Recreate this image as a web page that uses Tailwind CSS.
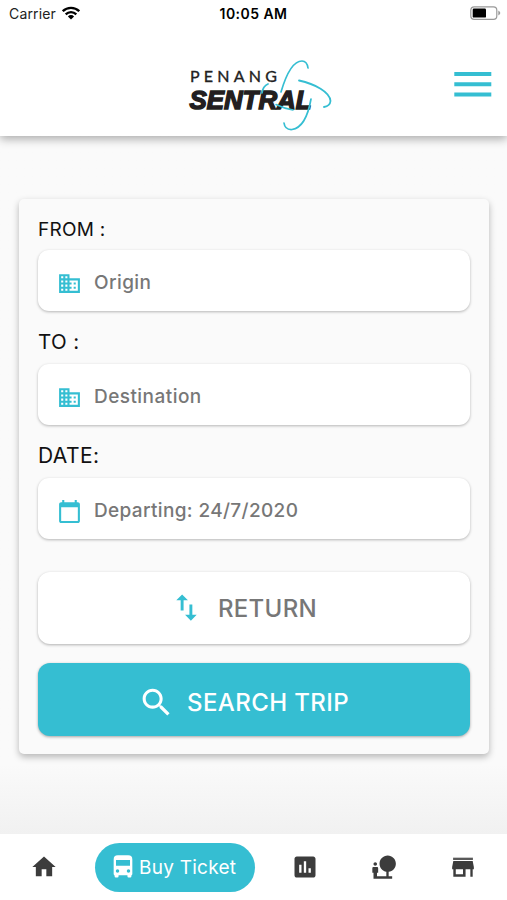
<!DOCTYPE html>
<html lang="en">
<head>
<meta charset="utf-8">
<title>Penang Sentral</title>
<script src="https://cdn.jsdelivr.net/npm/@tailwindcss/browser@4"></script>
</head>
<body class="w-[507px] h-[900px] overflow-hidden bg-[#fafafa] flex flex-col font-['Inter',sans-serif]">
<header class="relative z-10 h-[136px] shrink-0 bg-white shadow-[0_3px_9px_rgba(0,0,0,0.32)] flex flex-col">
  <div class="h-7 grid grid-cols-3 items-center pl-[9px] pr-[6px] text-black">
    <div class="flex items-center gap-[6px] -mt-[2px]">
      <span class="text-[14px] tracking-[0.15px] text-[#222]">Carrier</span>
      <svg class="w-[18px] h-[14px]" viewBox="0 0 18 14"><g fill="none" stroke="#000" stroke-width="2.3"><path d="M.8 5.2a11.7 11.7 0 0 1 16.4 0"/><path d="M3.700 8.400a7.500 7.500 0 0 1 10.600 0"/></g><path d="M5.900 10.400a4.400 4.400 0 0 1 6.200 0L9 13.600z"/></svg>
    </div>
    <span class="text-center text-[14px] font-semibold tracking-[0.45px] whitespace-nowrap -mt-[2px] -ml-[3px]">10:05 AM</span>
    <svg class="justify-self-end w-[31px] h-[14px] -mt-[2px]" viewBox="0 0 31 14"><rect x=".8" y=".8" width="26" height="12.600" rx="3.400" fill="#fff" stroke="#999" stroke-width="1.200"/><rect x="2.700" y="2.600" width="13.300" height="9" rx="1.200"/><path d="M28.300 4.500q4 2.500 0 5z" fill="#999"/></svg>
  </div>
  <div class="flex-1 flex items-start justify-end pr-[14px]">
    <svg class="w-[150px] h-[80px] mt-[24px] mr-[119px]" viewBox="184 52 150 80">
      <text x="190" y="81.500" font-family="Lato" font-size="16" fill="#222" stroke="#222" stroke-width=".35" textLength="87" lengthAdjust="spacing">PENANG</text>
      <text x="189.500" y="108.800" font-family="Liberation Sans" font-size="26.500" font-weight="700" font-style="italic" fill="#231f20" stroke="#231f20" stroke-width="1.500" textLength="122" lengthAdjust="spacingAndGlyphs">SENTRAL</text>
      <g fill="none" stroke="#35bed2" stroke-linecap="round">
        <path d="M281 92C286 75 293 61 302 61Q307 61 308 68" stroke-width="1.700"/>
        <path d="M299 80.500C315 84 330 92 330.500 101Q330 106 324 107" stroke-width="1.800"/>
        <path d="M284 123Q285 130 292 129.500C302 128 308 116 311 99" stroke-width="1.700"/>
        <path d="M262 93Q263 86 268 84" stroke-width="1.700"/>
        <path d="M276 104.500Q284 108.500 293 110" stroke-width="1.500"/>
      </g>
    </svg>
    <svg class="w-[40px] h-[28px] mt-[42px]" viewBox="0 0 40 28" fill="#35bed2"><path d="M1.300 2h37v4h-37zM1.300 12.200h37v4h-37zM1.300 22.400h37v4h-37z"/></svg>
  </div>
</header>

<main class="flex-1 px-[19px] pt-[63px] bg-linear-to-b from-[#fafafa] from-90% to-[#f1f1f1]">
  <section class="w-[470px] h-[555px] rounded-[5px] bg-[#fafafa] shadow-[0_3px_7px_rgba(0,0,0,0.28)] px-[19px] pt-[18px] flex flex-col text-[19.5px] text-[#111]">
    <label class="h-[33px] pt-px leading-6 text-[19px] tracking-[0.25px]">FROM :</label>
    <div class="h-[61px] shrink-0 rounded-[11px] bg-white shadow-[0_1px_3px_rgba(0,0,0,0.28)] flex items-center pl-[19px] pt-[5px] gap-[12px] text-[#777] font-medium">
      <svg class="w-[25px] h-[25px]" viewBox="0 0 24 24" fill="#35bed2"><path d="M12 7V3H2v18h20V7H12zM6 19H4v-2h2v2zm0-4H4v-2h2v2zm0-4H4V9h2v2zm0-4H4V5h2v2zm4 12H8v-2h2v2zm0-4H8v-2h2v2zm0-4H8V9h2v2zm0-4H8V5h2v2zm10 12h-8v-2h2v-2h-2v-2h2v-2h-2V9h8v10zm-2-8h-2v2h2v-2zm0 4h-2v2h2v-2z"/></svg>
      <span class="text-[19px] tracking-[0.4px] pt-px">Origin</span>
    </div>
    <label class="h-[53px] pt-[19px] leading-6 text-[20.5px] tracking-[0.4px]">TO :</label>
    <div class="h-[61px] shrink-0 rounded-[11px] bg-white shadow-[0_1px_3px_rgba(0,0,0,0.28)] flex items-center pl-[19px] pt-[5px] gap-[12px] text-[#777] font-medium">
      <svg class="w-[25px] h-[25px]" viewBox="0 0 24 24" fill="#35bed2"><path d="M12 7V3H2v18h20V7H12zM6 19H4v-2h2v2zm0-4H4v-2h2v2zm0-4H4V9h2v2zm0-4H4V5h2v2zm4 12H8v-2h2v2zm0-4H8v-2h2v2zm0-4H8V9h2v2zm0-4H8V5h2v2zm10 12h-8v-2h2v-2h-2v-2h2v-2h-2V9h8v10zm-2-8h-2v2h2v-2zm0 4h-2v2h2v-2z"/></svg>
      <span class="text-[19px] tracking-[0.45px] pt-px">Destination</span>
    </div>
    <label class="h-[53px] pt-[19px] leading-6 text-[21px] tracking-[0.4px]">DATE:</label>
    <div class="h-[61px] shrink-0 rounded-[11px] bg-white shadow-[0_1px_3px_rgba(0,0,0,0.28)] flex items-center pl-[19px] pt-[5px] gap-[12px] text-[#777] font-medium">
      <svg class="w-[25px] h-[25px]" viewBox="0 0 24 24" fill="#35bed2"><path d="M20 3h-1V1h-2v2H7V1H5v2H4c-1.100 0-2 .9-2 2v16c0 1.100.9 2 2 2h16c1.100 0 2-.9 2-2V5c0-1.100-.9-2-2-2zm0 18H4V8h16v13z"/></svg>
      <span class="text-[19px] tracking-[0.35px] pt-px">Departing: 24/7/2020</span>
    </div>
    <button class="mt-[33px] h-[72px] shrink-0 rounded-[12px] bg-white shadow-[0_1px_3px_rgba(0,0,0,0.3)] flex items-center pl-[131px] gap-[14px] text-[#777] font-medium">
      <svg class="w-[35px] h-[35px] -mt-px" viewBox="0 0 24 24" fill="#35bed2"><path d="M9 3L5 6.990h3V14h2V6.990h3L9 3zm7 14.010V10h-2v7.010h-3L15 21l4-3.990h-3z"/></svg>
      <span class="text-[24px] tracking-[0.3px] pt-px">RETURN</span>
    </button>
    <button class="mt-[19px] h-[73px] shrink-0 rounded-[12px] bg-[#35bed2] shadow-[0_1px_3px_rgba(0,0,0,0.35)] flex items-center pl-[100px] pt-[5px] gap-[12px] text-white font-medium">
      <svg class="w-[37px] h-[37px]" viewBox="0 0 24 24" fill="#fff"><path d="M15.500 14h-.79l-.28-.27C15.410 12.590 16 11.110 16 9.500 16 5.910 13.090 3 9.500 3S3 5.910 3 9.500 5.910 16 9.500 16c1.610 0 3.090-.59 4.230-1.570l.27.28v.79l5 4.990L20.490 19l-4.990-5zm-6 0C7.010 14 5 11.990 5 9.500S7.010 5 9.500 5 14 7.010 14 9.500 11.990 14 9.500 14z"/></svg>
      <span class="text-[24px] tracking-[0.4px] pt-px">SEARCH TRIP</span>
    </button>
  </section>
</main>

<nav class="h-[66px] shrink-0 bg-white flex items-center pl-[30px] text-[#3c3c3c]">
  <svg class="w-7 h-7 mr-[37px]" viewBox="0 0 24 24" fill="currentColor"><path d="M10 20v-6h4v6h5v-8h3L12 3 2 12h3v8z"/></svg>
  <a class="w-[160px] h-[49px] rounded-full bg-[#35bed2] text-white flex items-center pl-[14px] gap-[2px] mr-[36px]">
    <svg class="w-7 h-7 shrink-0" viewBox="0 0 24 24" fill="currentColor"><path fill-rule="evenodd" d="M4 5.500Q4 2 7.500 2h9Q20 2 20 5.500V18q0 .8-.8 1.200V20q0 1-1 1h-1.400q-1 0-1-1v-1H8.200v1q0 1-1 1H5.800q-1 0-1-1v-.8Q4 18.800 4 18zM6 6v5h12V6zM7.300 14a1.500 1.500 0 1 0 0 3 1.500 1.500 0 0 0 0-3zm9.400 0a1.500 1.500 0 1 0 0 3 1.500 1.500 0 0 0 0-3z"/></svg>
    <span class="text-[19px] tracking-[0.25px] whitespace-nowrap pt-[2px]">Buy Ticket</span>
  </a>
  <svg class="w-7 h-7 mr-[51px]" viewBox="0 0 24 24" fill="currentColor"><path d="M19 3H5c-1.100 0-2 .9-2 2v14c0 1.100.9 2 2 2h14c1.100 0 2-.9 2-2V5c0-1.100-.9-2-2-2zM9 17H7v-7h2v7zm4 0h-2V7h2v10zm4 0h-2v-4h2v4z"/></svg>
  <svg class="w-7 h-7 mr-[51px]" viewBox="0 0 24 24" fill="currentColor"><path d="M22.170 9.170c0-3.870-3.130-7-7-7s-7 3.130-7 7c0 3.470 2.520 6.340 5.830 6.890V20H6v-3h1v-4c0-.55-.45-1-1-1H3c-.55 0-1 .45-1 1v4h1v5h16v-2h-3v-3.880c3.470-.41 6.170-3.370 6.170-6.950zM4.500 11c.83 0 1.500-.67 1.500-1.500S5.330 8 4.500 8 3 8.670 3 9.500 3.670 11 4.500 11z"/></svg>
  <svg class="w-7 h-7" viewBox="0 0 24 24" fill="currentColor"><path fill-opacity=".85" d="M20.500 4h-17v2h17z"/><path d="M21.300 14v-2l-1-5.200H3.700l-1 5.200v2h1v6.300h10.500V14h4.100v6.300h2V14h1zm-9.300 4.300H5.800V14H12v4.300z"/></svg>
</nav>
</body>
</html>
